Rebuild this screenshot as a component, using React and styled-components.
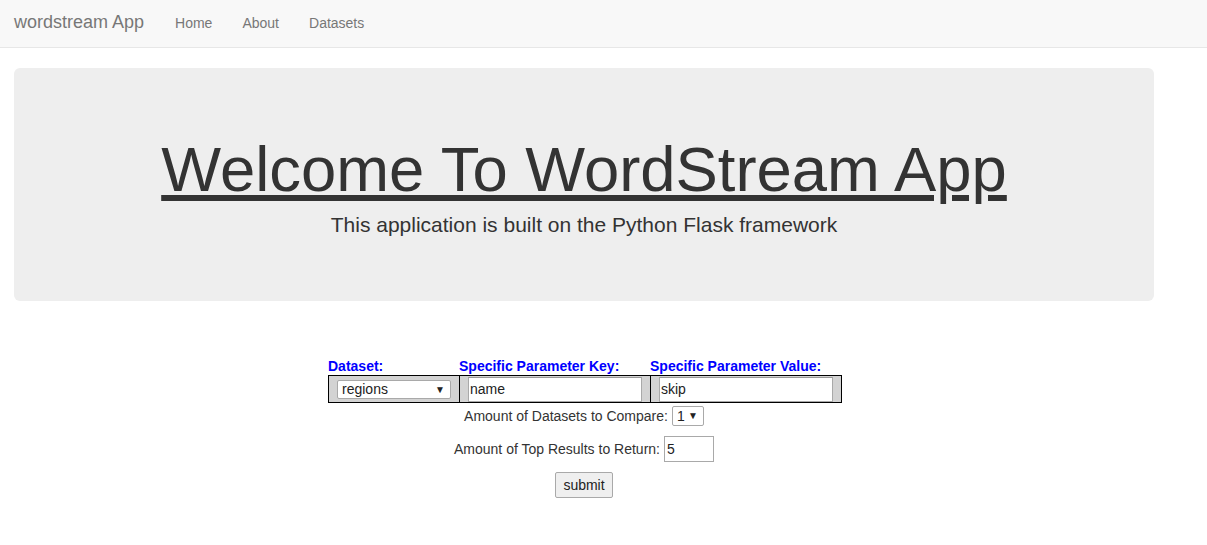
import React from "react";
import styled, { createGlobalStyle } from "styled-components";

const GlobalStyle = createGlobalStyle`
  body {
    margin: 0;
    background: #fff;
    font-family: "Liberation Sans", Arial, sans-serif;
    font-size: 14px;
    color: #333;
  }
`;

const App = () => {
  return (
    <>
      <GlobalStyle />
      <Navbar>
        <Brand>wordstream App</Brand>
        <NavLink>Home</NavLink>
        <NavLink>About</NavLink>
        <NavLink>Datasets</NavLink>
      </Navbar>
      <Container>
        <Jumbotron>
          <Title>
            <u>Welcome To WordStream App</u>
          </Title>
          <Lead>This application is built on the Python Flask framework</Lead>
        </Jumbotron>

        <Form>
          <FieldGrid>
            <FieldLabel>Dataset:</FieldLabel>
            <FieldLabel>Specific Parameter Key:</FieldLabel>
            <FieldLabel>Specific Parameter Value:</FieldLabel>
            <Cell>
              <SelectWrap $width={114}>
                <Select defaultValue="regions">
                  <option>regions</option>
                </Select>
                <Arrow>▼</Arrow>
              </SelectWrap>
            </Cell>
            <Cell>
              <TextInput defaultValue="name" />
            </Cell>
            <Cell $last>
              <TextInput defaultValue="skip" />
            </Cell>
          </FieldGrid>

          <Line $top={3}>
            Amount of Datasets to Compare:
            <SelectWrap $width={32} $small>
              <Select defaultValue="1">
                <option>1</option>
              </Select>
              <Arrow>▼</Arrow>
            </SelectWrap>
          </Line>
          <Line $top={10}>
            Amount of Top Results to Return:
            <NumberInput defaultValue="5" />
          </Line>
          <Line $top={10}>
            <Submit type="button">submit</Submit>
          </Line>
        </Form>
      </Container>
    </>
  );
};

export default App;

const Navbar = styled.nav`
  display: flex;
  align-items: center;
  height: 45px;
  padding: 0 14px 2px;
  background: #f8f8f8;
  border-bottom: 1px solid #e7e7e7;
`;

const Brand = styled.a`
  font-size: 18px;
  color: #777;
  margin-right: 16px;
`;

const NavLink = styled.a`
  font-size: 14px;
  color: #777;
  padding: 0 15px;
`;

const Container = styled.div`
  width: 1140px;
  margin-left: 14px;
`;

const Jumbotron = styled.div`
  margin-top: 20px;
  padding: 67px 60px 61px;
  background: #eee;
  border-radius: 6px;
  text-align: center;
`;

const Title = styled.h1`
  margin: 0 0 6px;
  font-size: 63.4px;
  font-weight: 400;
  line-height: 69px;
  color: #333;
`;

const Lead = styled.p`
  margin: 0;
  font-size: 21px;
  line-height: 30px;
  font-weight: 300;
`;

const Form = styled.div`
  margin-top: 55px;
  display: flex;
  flex-direction: column;
  align-items: center;
  padding-bottom: 40px;
`;

const FieldGrid = styled.div`
  display: grid;
  grid-template-columns: 131px 191px 192px;
  margin-left: 2px;
`;

const FieldLabel = styled.div`
  padding-top: 2px;
  font-weight: 700;
  color: #0000ff;
  line-height: 17px;
`;

const Cell = styled.div`
  display: flex;
  align-items: center;
  height: 26px;
  padding: 0 8px;
  background: #d3d3d3;
  border: 1px solid #000;
  border-right: ${({ $last }) => ($last ? "1px solid #000" : "0")};
`;

const SelectWrap = styled.span`
  position: relative;
  display: inline-block;
  width: ${({ $width }) => $width}px;
  height: ${({ $small }) => ($small ? 20 : 19)}px;
  margin-left: ${({ $small }) => ($small ? 4 : 0)}px;
  vertical-align: middle;
`;

const Select = styled.select`
  appearance: none;
  width: 100%;
  height: 100%;
  box-sizing: border-box;
  margin: 0;
  padding: 0 0 0 4px;
  border: 1px solid #a9a9a9;
  border-radius: 2px;
  background: #fff;
  font-family: "Liberation Sans", Arial, sans-serif;
  font-size: 14px;
  color: #222;
`;

const Arrow = styled.span`
  position: absolute;
  right: 6px;
  top: 50%;
  transform: translateY(-50%);
  font-size: 10px;
  color: #222;
  pointer-events: none;
`;

const TextInput = styled.input`
  width: 100%;
  height: 25px;
  box-sizing: border-box;
  margin: 0;
  padding: 0 1px;
  border: 1px solid #a9a9a9;
  border-top-color: #999;
  background: #fff;
  font-family: "Liberation Sans", Arial, sans-serif;
  font-size: 14px;
  color: #222;
  outline: none;
`;

const Line = styled.div`
  display: flex;
  align-items: center;
  margin-top: ${({ $top }) => $top}px;
  line-height: 20px;
  color: #333;
`;

const NumberInput = styled.input`
  width: 50px;
  height: 26px;
  box-sizing: border-box;
  margin: 0 0 0 4px;
  padding: 0 2px;
  border: 1px solid #a9a9a9;
  font-family: "Liberation Sans", Arial, sans-serif;
  font-size: 14px;
  color: #222;
  outline: none;
`;

const Submit = styled.button`
  width: 58px;
  height: 26px;
  padding: 0;
  border: 1px solid #a9a9a9;
  border-radius: 2px;
  background: #efefef;
  font-family: "Liberation Sans", Arial, sans-serif;
  font-size: 14px;
  color: #222;
`;
